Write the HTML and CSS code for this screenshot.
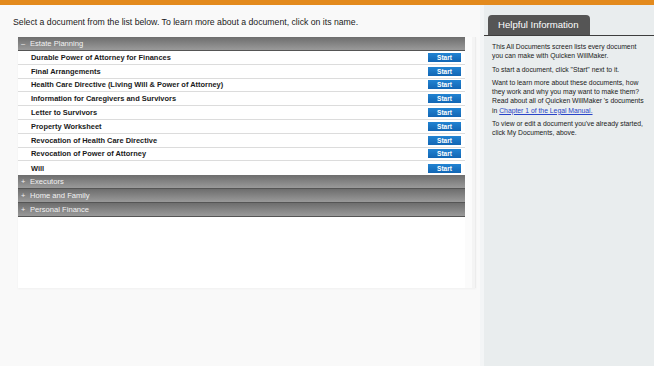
FILE: index.html
```html
<!DOCTYPE html>
<html>
<head>
<meta charset="utf-8">
<link rel="stylesheet" href="styles.css">
</head>
<body>
<div class="topbar"></div>
<div class="layout">
  <main class="main">
    <p class="intro">Select a document from the list below. To learn more about a document, click on its name.</p>
    <div class="panel">
      <div class="list">
        <div class="group-head"><span class="sign">–</span>Estate Planning</div>
        <div class="row"><span class="name">Durable Power of Attorney for Finances</span><button class="start">Start</button></div>
        <div class="row"><span class="name">Final Arrangements</span><button class="start">Start</button></div>
        <div class="row"><span class="name">Health Care Directive (Living Will &amp; Power of Attorney)</span><button class="start">Start</button></div>
        <div class="row"><span class="name">Information for Caregivers and Survivors</span><button class="start">Start</button></div>
        <div class="row"><span class="name">Letter to Survivors</span><button class="start">Start</button></div>
        <div class="row"><span class="name">Property Worksheet</span><button class="start">Start</button></div>
        <div class="row"><span class="name">Revocation of Health Care Directive</span><button class="start">Start</button></div>
        <div class="row"><span class="name">Revocation of Power of Attorney</span><button class="start">Start</button></div>
        <div class="row"><span class="name">Will</span><button class="start">Start</button></div>
        <div class="group-head"><span class="sign">+</span>Executors</div>
        <div class="group-head"><span class="sign">+</span>Home and Family</div>
        <div class="group-head"><span class="sign">+</span>Personal Finance</div>
      </div>
      <div class="track"></div>
    </div>
  </main>
  <aside class="side">
    <div class="tabs"><div class="tab">Helpful Information</div></div>
    <div class="info">
      <p>This All Documents screen lists every document you can make with Quicken WillMaker.</p>
      <p>To start a document, click "Start" next to it.</p>
      <p>Want to learn more about these documents, how they work and why you may want to make them? Read about all of Quicken WillMaker 's documents in <a href="#">Chapter 1 of the Legal Manual.</a></p>
      <p>To view or edit a document you've already started, click My Documents, above.</p>
    </div>
  </aside>
</div>
</body>
</html>
```
FILE: styles.css
```css
* { box-sizing: border-box; }
html, body { margin: 0; padding: 0; height: 100%; }
body {
  font-family: "Liberation Sans", Arial, sans-serif;
  background: #f9f9f9;
  color: #111;
  display: flex;
  flex-direction: column;
}
.topbar { height: 5px; background: #e38a1d; flex: none; }
.layout { display: flex; flex: 1; }
.main { flex: 1; }
.intro {
  margin: 10px 0 0 13px;
  font-size: 8.7px;
  line-height: 14px;
  color: #1a1a1a;
}
.panel {
  margin: 8px 0 0 18px;
  width: 458px;
  height: 251px;
  display: flex;
  box-shadow: 0 1px 2px rgba(0,0,0,0.04);
}
.list { width: 447px; background: #fff; }
.track {
  width: 11px;
  background: #fbfbfb;
  border-right: 1px solid #ececec;
  box-shadow: inset -3px 0 0 #f4f4f4;
}
.group-head {
  height: 14px;
  background: linear-gradient(#6d6d6d, #9a9a9a);
  border-bottom: 1px solid #555;
  color: #f2f2f2;
  font-size: 7.6px;
  padding-left: 3px;
  display: flex;
  align-items: center;
}
.sign { width: 9px; display: inline-block; font-size: 7.4px; }
.row {
  height: 13.8px;
  border-bottom: 1px solid #dcdcdc;
  display: flex;
  align-items: center;
  justify-content: space-between;
  padding: 0 4px 0 13px;
}
.row:nth-of-type(10) { border-bottom: none; }
.name {
  font-weight: bold;
  font-size: 7.45px;
  color: #1a1a1a;
}
.start {
  width: 33px;
  height: 9px;
  padding: 0;
  border: none;
  background: linear-gradient(#2183d2, #1266b4);
  color: #fff;
  font-family: "Liberation Sans", Arial, sans-serif;
  font-size: 6.5px;
  font-weight: bold;
  line-height: 9px;
}
.side {
  width: 174px;
  background: #e9edee;
  border-left: 4px solid #f3f5f6;
  flex: none;
}
.tabs {
  margin-top: 11px;
  height: 20px;
  border-bottom: 1px solid #3d3d3d;
  padding-left: 4px;
  display: flex;
  align-items: flex-end;
}
.tab {
  width: 102px;
  height: 20px;
  background: #555;
  border-radius: 4px 4px 0 0;
  color: #fff;
  font-size: 9.6px;
  line-height: 20px;
  padding-left: 10px;
}
.info {
  padding: 6px 8px 0 8px;
  font-size: 6.8px;
  line-height: 9.3px;
  color: #1a1a1a;
}
.info p { margin: 0 0 4px 0; }
.info a { color: #2945c8; text-decoration: underline; }
```
